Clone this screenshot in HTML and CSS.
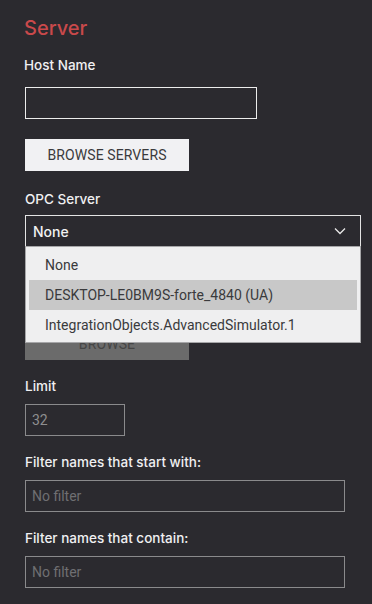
FILE: index.html
```html
<!DOCTYPE html>
<html lang="en">
  <head>
    <meta charset="UTF-8" />
    <meta name="viewport" content="width=device-width, initial-scale=1.0" />
    <title>Server</title>
    <link rel="stylesheet" href="styles.css">
  </head>
  <body>
    <div class="panel">
      <h2 class="title">Server</h2>

      <label class="label host-label">Host Name</label>
      <input class="field host-field" type="text" />

      <button class="btn browse-servers">BROWSE SERVERS</button>

      <label class="label opc-label">OPC Server</label>
      <div class="select-wrap">
        <div class="select">
          <span>None</span>
          <svg class="chevron" width="12" height="8" viewBox="0 0 12 8">
            <path d="M1 1.5 L6 6.5 L11 1.5" fill="none" stroke="#e8e8e8" stroke-width="1.3" />
          </svg>
        </div>
        <ul class="options">
          <li class="option">None</li>
          <li class="option active">DESKTOP-LE0BM9S-forte_4840 (UA)</li>
          <li class="option">IntegrationObjects.AdvancedSimulator.1</li>
        </ul>
      </div>

      <button class="btn browse" disabled>BROWSE</button>

      <label class="label">Limit</label>
      <input class="field dim limit-field" type="text" value="32" />

      <label class="label">Filter names that start with:</label>
      <input class="field dim wide-field" type="text" placeholder="No filter" />

      <label class="label">Filter names that contain:</label>
      <input class="field dim wide-field" type="text" placeholder="No filter" />
    </div>
  </body>
</html>
```

FILE: styles.css
```css
body {
  margin: 0;
  padding: 0;
  background: #2b2a2f;
  font-family: "Inter", "Roboto", sans-serif;
  height: 100vh;
  overflow: hidden;
}

.panel {
  display: flex;
  flex-direction: column;
  align-items: flex-start;
  padding: 14px 11px 0 25px;
}

.title {
  margin: 0 0 0 -1px;
  font-size: 20px;
  line-height: 28px;
  font-weight: 500;
  color: #c9494b;
}

.label {
  display: block;
  margin-top: 16px;
  font-size: 13.5px;
  line-height: 20px;
  font-weight: 500;
  color: #f0f0f2;
}
.host-label {
  margin-top: 13px;
  margin-left: -1px;
}
.opc-label {
  margin-top: 18px;
}

.field {
  box-sizing: border-box;
  margin: 8px 0 0 0;
  height: 32px;
  padding: 0 6px;
  background: transparent;
  border: 1px solid #ececec;
  outline: none;
  font-family: "Roboto", sans-serif;
  font-size: 14px;
  color: #f0f0f0;
}
.host-field {
  width: 232px;
  margin-top: 12px;
}
.field.dim {
  border-color: #8a8a8c;
  color: #8e8e90;
}
.field.dim::placeholder {
  color: #6f6f72;
}
.limit-field {
  width: 100px;
}
.wide-field {
  width: 320px;
}

.btn {
  box-sizing: border-box;
  width: 164px;
  height: 32px;
  border: none;
  font-family: "Roboto", sans-serif;
  font-size: 14px;
  letter-spacing: 0.1px;
}
.browse-servers {
  margin-top: 20px;
  background: #f1f1f3;
  color: #3a3a3c;
}
.browse {
  margin-top: 82px;
  background: #6b6b6b;
  color: #454545;
}

.select-wrap {
  position: relative;
  margin-top: 6px;
  width: 336px;
}
.select {
  box-sizing: border-box;
  display: flex;
  justify-content: space-between;
  align-items: center;
  height: 31px;
  padding: 0 14px 0 7px;
  border: 1px solid #e4e4e4;
  border-bottom: none;
  font-size: 14px;
  font-weight: 500;
  color: #f2f2f2;
}

.options {
  position: absolute;
  top: 31px;
  left: 0;
  right: 0;
  z-index: 2;
  margin: 0;
  padding: 3px;
  list-style: none;
  background: #efeff0;
  border: 1px solid #a6a6a8;
  box-sizing: border-box;
  height: 97px;
}
.option {
  height: 30px;
  line-height: 30px;
  padding-left: 16px;
  font-family: "Roboto", sans-serif;
  font-size: 14px;
  color: #3a3a3c;
}
.option.active {
  background: #c8c8c8;
}
```
